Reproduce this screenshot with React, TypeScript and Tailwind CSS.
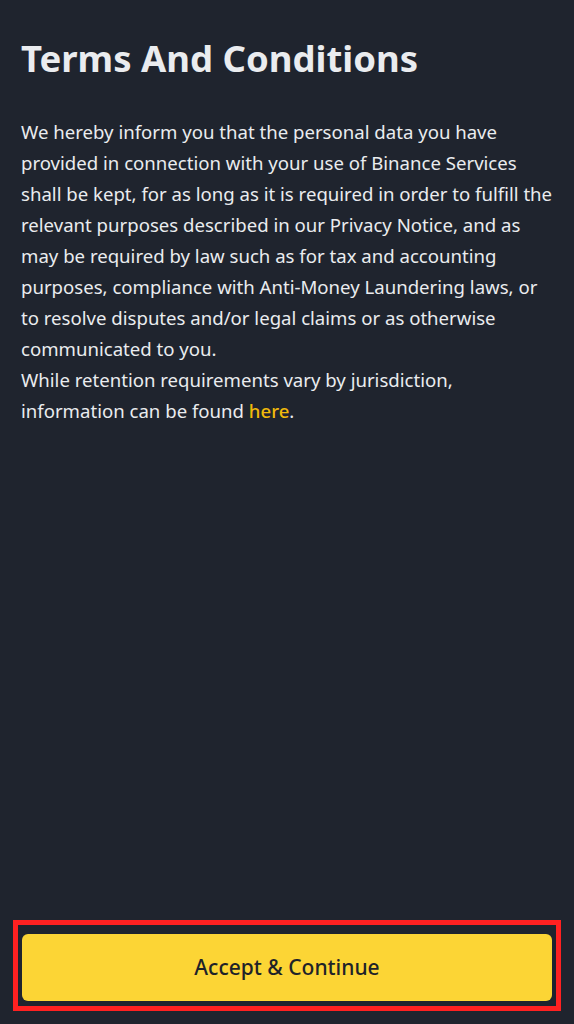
import React from 'react';

const lines = [
  'We hereby inform you that the personal data you have',
  'provided in connection with your use of Binance Services',
  'shall be kept, for as long as it is required in order to fulfill the',
  'relevant purposes described in our Privacy Notice, and as',
  'may be required by law such as for tax and accounting',
  'purposes, compliance with Anti-Money Laundering laws, or',
  'to resolve disputes and/or legal claims or as otherwise',
  'communicated to you.',
  'While retention requirements vary by jurisdiction,',
];

export default function App() {
  return (
    <div
      className="flex h-[1024px] w-[574px] flex-col bg-[#1f242e] text-[#eaecef]"
      style={{ fontFamily: '"Noto Sans", "Open Sans", sans-serif' }}
    >
      {/* Header + body copy */}
      <div className="flex-1 px-[21px] pt-[33px]">
        <h1 className="text-[36.5px] font-bold leading-[50px] text-[#eaecef]">Terms And Conditions</h1>
        <p className="mt-[33px] whitespace-nowrap text-[18.6px] leading-[31px] text-[#eaecef]">
          {lines.map((l) => (
            <span key={l} className="block">
              {l}
            </span>
          ))}
          <span className="block">
            information can be found <span className="font-medium text-[#f0b90b]">here</span>.
          </span>
        </p>
      </div>

      {/* Highlighted action */}
      <div className="mx-[13px] mb-[13px] border-[5px] border-[#ff2121] pb-[5px] pl-[4px] pr-[4px] pt-[9px]">
        <button className="flex h-[67px] w-full items-center justify-center rounded-[6px] bg-[#fcd535] text-[21px] font-medium text-[#1e2329]">
          Accept &amp; Continue
        </button>
      </div>
    </div>
  );
}
